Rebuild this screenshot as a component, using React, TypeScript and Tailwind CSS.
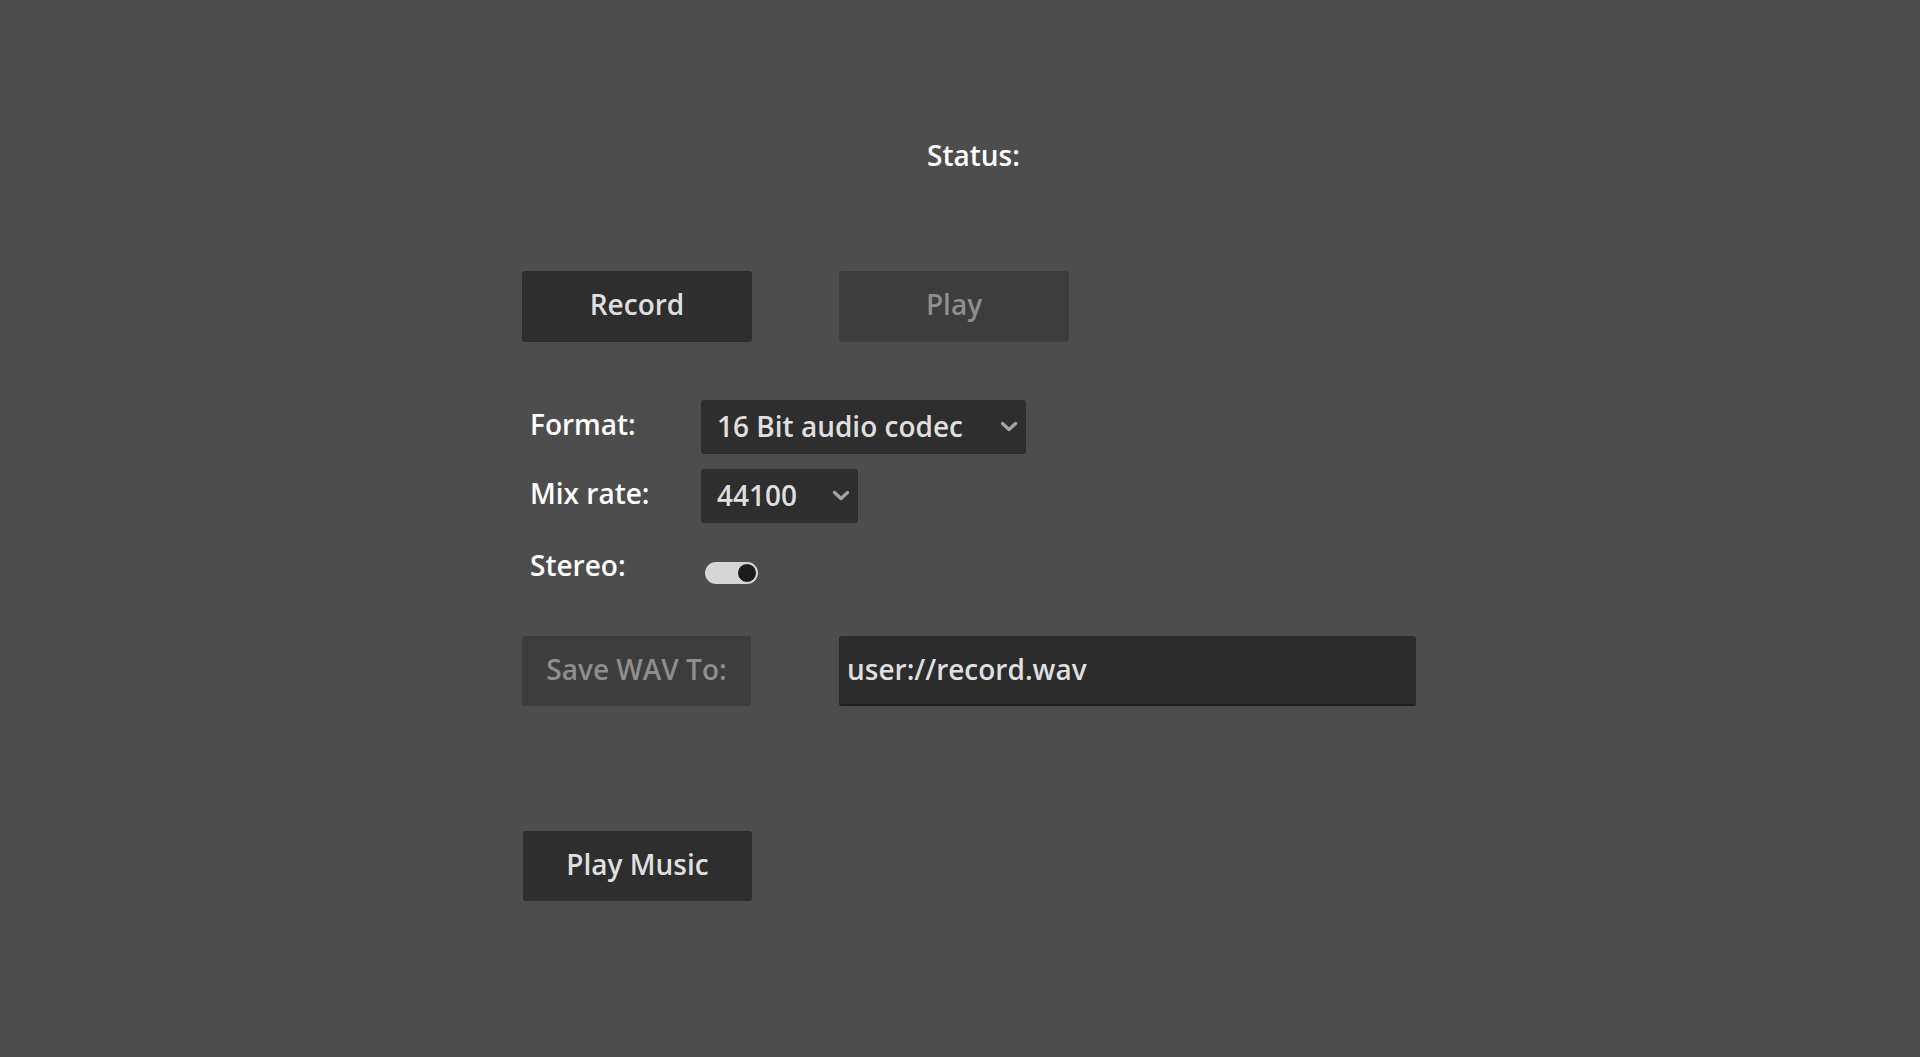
import React, { useState } from 'react';

const Chevron: React.FC = () => (
  <svg width="18" height="11" viewBox="0 0 18 11" fill="none">
    <path d="M2.5 2.5 L9 8.5 L15.5 2.5" stroke="#a3a3a3" strokeWidth="3.4" strokeLinecap="round" strokeLinejoin="round" />
  </svg>
);

const Dropdown: React.FC<{ value: string; width: string }> = ({ value, width }) => (
  <button
    className={`${width} h-[54px] flex items-center justify-between pl-4 pr-2 pb-[2px] rounded-[3px] bg-[#2e2e2e] text-[#dfdfdf] text-[28px] leading-[38px]`}
  >
    <span>{value}</span>
    <Chevron />
  </button>
);

export default function App() {
  const [stereo, setStereo] = useState(true);
  const [path, setPath] = useState('user://record.wav');

  return (
    <div
      className="h-screen w-full bg-[#4d4d4d] font-semibold overflow-hidden"
      style={{ fontFamily: '"Open Sans", "Noto Sans", sans-serif' }}
    >
      <div className="pl-[522px] pt-[136px] flex flex-col">
        {/* Status */}
        <div className="ml-[405px] text-white text-[28px] leading-[38px]">Status:</div>

        {/* Record / Play */}
        <div className="mt-[97px] flex gap-[87px]">
          <button className="w-[230px] h-[71px] pb-[5px] rounded-[3px] bg-[#2e2e2e] text-[#dfdfdf] text-[28px] leading-[38px]">
            Record
          </button>
          <button
            disabled
            className="w-[230px] h-[71px] pb-[5px] rounded-[3px] bg-[#3d3d3d] text-[#8e8e8e] text-[28px] leading-[38px]"
          >
            Play
          </button>
        </div>

        {/* Options */}
        <div className="mt-[58px] h-[54px] flex items-center">
          <span className="w-[179px] pl-2 mb-[6px] text-white text-[28px] leading-[38px]">Format:</span>
          <Dropdown value="16 Bit audio codec" width="w-[325px]" />
        </div>
        <div className="mt-[15px] h-[54px] flex items-center">
          <span className="w-[179px] pl-2 mb-[6px] text-white text-[28px] leading-[38px]">Mix rate:</span>
          <Dropdown value="44100" width="w-[157px]" />
        </div>
        <div className="mt-[15px] h-[54px] flex items-center">
          <span className="w-[179px] pl-2 text-white text-[28px] leading-[38px]">Stereo:</span>
          <button
            onClick={() => setStereo(!stereo)}
            className={`ml-[4px] mt-[16px] w-[53px] h-[22px] rounded-full bg-[#d6d6d6] flex items-center px-[1px] ${
              stereo ? 'justify-end' : 'justify-start'
            }`}
          >
            <span className="w-[20px] h-[20px] rounded-full bg-[#1c1c1c] border border-[#e8e8e8]" />
          </button>
        </div>

        {/* Save path */}
        <div className="mt-[44px] flex gap-[88px]">
          <button
            disabled
            className="w-[229px] h-[70px] pb-[4px] rounded-[3px] bg-[#3d3d3d] text-[#8e8e8e] text-[28px] leading-[38px]"
          >
            Save WAV To:
          </button>
          <input
            value={path}
            onChange={(e) => setPath(e.target.value)}
            className="w-[577px] h-[70px] rounded-[3px] bg-[#2c2c2c] border-b-2 border-[#1f1f1f] pl-2 pb-[3px] text-[#dfdfdf] text-[28px] outline-none font-semibold"
            style={{ fontFamily: '"Open Sans", "Noto Sans", sans-serif' }}
          />
        </div>

        {/* Play music */}
        <div className="mt-[125px] pl-[1px]">
          <button className="w-[229px] h-[70px] pb-[4px] rounded-[3px] bg-[#2e2e2e] text-[#dfdfdf] text-[28px] leading-[38px]">
            Play Music
          </button>
        </div>
      </div>
    </div>
  );
}
